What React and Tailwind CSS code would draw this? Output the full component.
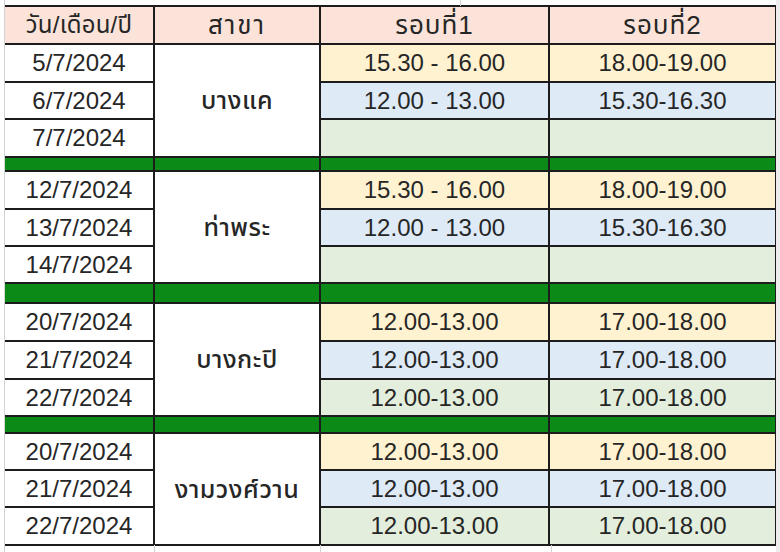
import React from "react";

const groups = [
  {
    branch: "บางแค",
    rows: [
      ["5/7/2024", "15.30 - 16.00", "18.00-19.00"],
      ["6/7/2024", "12.00 - 13.00", "15.30-16.30"],
      ["7/7/2024", "", ""],
    ],
    heights: ["h-[38px]", "h-[37px]", "h-[38px]"],
    band: "h-[14px]",
  },
  {
    branch: "ท่าพระ",
    rows: [
      ["12/7/2024", "15.30 - 16.00", "18.00-19.00"],
      ["13/7/2024", "12.00 - 13.00", "15.30-16.30"],
      ["14/7/2024", "", ""],
    ],
    heights: ["h-[38px]", "h-[37px]", "h-[37px]"],
    band: "h-[20px]",
  },
  {
    branch: "บางกะปิ",
    rows: [
      ["20/7/2024", "12.00-13.00", "17.00-18.00"],
      ["21/7/2024", "12.00-13.00", "17.00-18.00"],
      ["22/7/2024", "12.00-13.00", "17.00-18.00"],
    ],
    heights: ["h-[38px]", "h-[38px]", "h-[37px]"],
    band: "h-[17px]",
  },
  {
    branch: "งามวงศ์วาน",
    rows: [
      ["20/7/2024", "12.00-13.00", "17.00-18.00"],
      ["21/7/2024", "12.00-13.00", "17.00-18.00"],
      ["22/7/2024", "12.00-13.00", "17.00-18.00"],
    ],
    heights: ["h-[37px]", "h-[37px]", "h-[38px]"],
    band: null,
  },
];

const rowBg = ["bg-[#fff2d0]", "bg-[#deeaf6]", "bg-[#e3efdc]"];

const td = "border-2 border-[#1c1c1c] p-0 text-center align-middle leading-none";

export default function App() {
  return (
    <div
      className="relative w-[780px] h-[552px] bg-white overflow-hidden text-[#262626]"
      style={{ fontFamily: '"Liberation Sans", "Noto Sans Thai", "Noto Sans", sans-serif' }}
    >
      {/* spreadsheet gridlines around the table */}
      <div className="absolute left-[4px] top-0 h-full w-px bg-[#d4d4d4]" />
      <div className="absolute left-[776px] top-0 h-full w-[4px] bg-[#ececec]" />
      <div className="absolute left-[154px] top-[545px] h-[7px] w-px bg-[#d4d4d4]" />
      <div className="absolute left-[320px] top-[545px] h-[7px] w-px bg-[#d4d4d4]" />
      <div className="absolute left-[551px] top-[545px] h-[7px] w-px bg-[#d4d4d4]" />
      <div className="absolute left-[460px] top-0 h-[6px] w-px bg-[#d4d4d4]" />

      <div className="pt-[5px] pl-[5px]">
        <table className="border-collapse table-fixed w-[771px] text-[24px]">
          <colgroup>
            <col className="w-[149px]" />
            <col className="w-[166px]" />
            <col className="w-[229px]" />
            <col className="w-[227px]" />
          </colgroup>
          <tbody>
            <tr className="h-[38px] bg-[#fbe3d9]">
              <td className={td + " border-l-0 tracking-[0.2px]"}>วัน/เดือน/ปี</td>
              <td className={td + " text-[26px] tracking-[2px]"}>สาขา</td>
              <td className={td + " text-[26px] tracking-[1px]"}>รอบที่1</td>
              <td className={td + " text-[26px] tracking-[1px]"}>รอบที่2</td>
            </tr>
            {groups.map((g, gi) => (
              <React.Fragment key={gi}>
                {g.rows.map((r, ri) => (
                  <tr key={ri} className={g.heights[ri]}>
                    <td className={td + " border-l-0 bg-white"}>{r[0]}</td>
                    {ri === 0 && (
                      <td rowSpan={3} className={td + " bg-white font-medium text-[25px] tracking-[0.5px]"}>
                        {g.branch}
                      </td>
                    )}
                    <td className={td + " " + rowBg[ri]}>{r[1]}</td>
                    <td className={td + " " + rowBg[ri]}>{r[2]}</td>
                  </tr>
                ))}
                {g.band && (
                  <tr className={g.band + " bg-[#0b8a17]"}>
                    <td className={td + " border-l-0"} />
                    <td className={td} />
                    <td className={td} />
                    <td className={td} />
                  </tr>
                )}
              </React.Fragment>
            ))}
          </tbody>
        </table>
      </div>
    </div>
  );
}
